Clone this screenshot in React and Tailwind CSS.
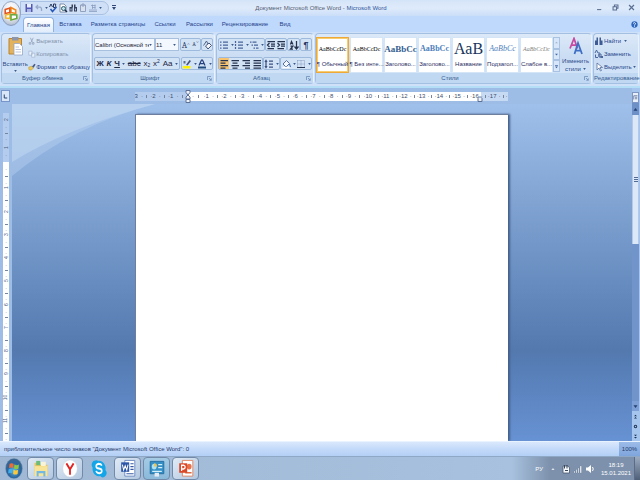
import clsx from 'clsx';

// Small caret used by every drop-down
const Caret = ({ className = '' }) => (
    <svg viewBox="0 0 4 3" className={clsx('w-[3px] h-[2px] shrink-0', className)}>
        <path d="M0 0h4L2 3z" fill="#3b5a8c" />
    </svg>
);

const Icon = ({ size = 'size-[10px]', box = '0 0 20 20', children }) => (
    <svg viewBox={box} className={clsx('shrink-0', size)} fill="none">
        {children}
    </svg>
);

const tabs = ['Вставка', 'Разметка страницы', 'Ссылки', 'Рассылки', 'Рецензирование', 'Вид'];
const tabWidths = ['w-[33px]', 'w-[62px]', 'w-[32px]', 'w-[37px]', 'w-[54px]', 'w-[26px]'];

const styles = [
    { sample: 'AaBbCcDc', name: '¶ Обычный', look: 'text-[6px] text-black', active: true },
    { sample: 'AaBbCcDc', name: '¶ Без инте...', look: 'text-[6px] text-black' },
    { sample: 'AaBbCc', name: 'Заголово...', look: 'text-[9px] font-serif-like font-bold text-[#365f91]' },
    { sample: 'AaBbCc', name: 'Заголово...', look: 'text-[8px] font-bold text-[#4f81bd]' },
    { sample: 'АаВ', name: 'Название', look: 'text-[16px] text-[#17365d]' },
    { sample: 'AaBbCc', name: 'Подзагол...', look: 'text-[8px] italic text-[#4f81bd]' },
    { sample: 'AaBbCcDc', name: 'Слабое в...', look: 'text-[6px] italic text-[#808080]' },
];

const OfficeButton = () => (
    <button aria-label="Office" className="absolute left-[1px] top-[1px] z-10 w-[20px] h-[25px]">
        <svg viewBox="0 0 38 50" preserveAspectRatio="none" className="size-full">
            <defs>
                <radialGradient id="orb" cx="50%" cy="30%" r="75%">
                    <stop offset="0" stopColor="#ffffff" />
                    <stop offset="0.6" stopColor="#e2e6ee" />
                    <stop offset="1" stopColor="#a6b2c8" />
                </radialGradient>
            </defs>
            <ellipse cx="19" cy="25" rx="18" ry="24" fill="url(#orb)" stroke="#7c8fb0" strokeWidth="1.5" />
            <path d="M8 17l9-3v9l-9 2z" fill="#fff" stroke="#e3541c" strokeWidth="3" />
            <path d="M19 13l9 5v7l-9-2z" fill="#fff" stroke="#ef8b1e" strokeWidth="3" />
            <path d="M9 28l8-2v9l-8-1z" fill="#fff" stroke="#f2b62c" strokeWidth="3" />
            <path d="M19 27l11 1v7l-11 3z" fill="#fff" stroke="#69a83b" strokeWidth="3" />
            <path d="M17 13v12" stroke="#e3541c" strokeWidth="2" />
        </svg>
    </button>
);

const QuickAccess = () => (
    <div className="flex items-center h-[14px] ml-[20px] mt-[1px] pl-[3px] pr-[6px] rounded-r-full border border-[#a9c1e4] bg-[#cfdff5]">
        <button aria-label="Сохранить">
            <Icon>
                <path d="M3 2h14v16H3z" fill="#5259b5" />
                <path d="M6 2h8v7H6z" fill="#e8efff" />
                <path d="M6 12h8v6H6z" fill="#aab6e2" />
            </Icon>
        </button>
        <button aria-label="Отменить" className="flex items-center gap-[1px]">
            <Icon><path d="M5 8h7q4 1 3 8M8 4L4 8l4 4" stroke="#97a9ca" strokeWidth="2.5" /></Icon>
            <Caret />
        </button>
        <button aria-label="Правописание">
            <Icon>
                <path d="M3 8l3-6 3 6M11 2h4q2 3-1 3 3 1 1 4h-4z" stroke="#26375f" strokeWidth="2" />
                <path d="M5 12l4 5 8-9" stroke="#2557b8" strokeWidth="3" />
            </Icon>
        </button>
        <button aria-label="Просмотр">
            <Icon>
                <path d="M4 2h8l4 4v12H4z" fill="#fff" stroke="#5c6f93" strokeWidth="1.5" />
                <circle cx="11" cy="11" r="4" fill="#bfe0ee" stroke="#2d5c69" strokeWidth="2" />
                <path d="M14 14l4 4" stroke="#1d2840" strokeWidth="3" />
            </Icon>
        </button>
        <button aria-label="Найти">
            <Icon>
                <path d="M3 8h6v9H3zM12 8h6v9h-6zM7 3h3v6H7zM12 3h3v6h-3z" fill="#36415b" />
                <path d="M5 11h2v4H5zM14 11h2v4h-2z" fill="#bac9e5" />
            </Icon>
        </button>
        <button aria-label="Вставить">
            <Icon><path d="M5 4h10v13H5zM8 2h4v4H8z" fill="#d9e1ef" stroke="#91a2c1" strokeWidth="2" /></Icon>
        </button>
        <button aria-label="Таблица" className="flex items-center gap-[1px]">
            <Icon><path d="M2 14h16M2 17h16M6 5h9M8 9h7M9 3v9M14 3v9" stroke="#8599bd" strokeWidth="1.5" /></Icon>
            <Caret />
        </button>
    </div>
);

const TitleBar = () => (
    <div className="flex h-4 bg-gradient-to-b from-[#d4e4f8] via-[#dfebfb] to-[#cadef8]">
        <div className="w-[116px] shrink-0 flex items-start">
            <QuickAccess />
            <button aria-label="Настройка панели" className="ml-[3px] mt-[5px]">
                <svg viewBox="0 0 4 5" className="w-1 h-[5px]"><path d="M0 0h4v1H0zM0 2h4L2 5z" fill="#304978" /></svg>
            </button>
        </div>
        <h1 className="flex-1 pt-1 text-center whitespace-nowrap text-[#566073]">
            Документ Microsoft Office Word - <span className="text-[#2f559c]">Microsoft Word</span>
        </h1>
        <div className="w-[114px] shrink-0 flex justify-end items-center gap-[9px] pr-[5px] pb-[2px]">
            <button aria-label="Свернуть"><Icon size="size-[7px]"><path d="M3 16h12" stroke="#5b6f92" strokeWidth="3" /></Icon></button>
            <button aria-label="Развернуть"><Icon size="size-[7px]"><path d="M7 7V3h10v9h-4M3 8h10v9H3z" stroke="#5b6f92" strokeWidth="3" /></Icon></button>
            <button aria-label="Закрыть"><Icon size="size-[7px]"><path d="M3 3l14 14M17 3L3 17" stroke="#5b6f92" strokeWidth="3.5" /></Icon></button>
        </div>
    </div>
);

const TabBar = () => (
    <nav className="flex h-4 pl-[23px] bg-[#bfd9fc] text-[#1f3f8a]">
        <button className="w-[31px] mt-[1px] rounded-t-sm border border-b-0 border-[#92b2de] bg-gradient-to-b from-white to-[#e1edfb] text-center">
            Главная
        </button>
        {tabs.map((tab, i) => (
            <button key={tab} className={clsx('text-center whitespace-nowrap', tabWidths[i])}>{tab}</button>
        ))}
        <button aria-label="Справка" className="ml-auto mr-[2px]">
            <Icon size="size-[7px]">
                <circle cx="10" cy="10" r="9" fill="#2c66bd" />
                <path d="M6 7q4-5 7 0 0 3-3 4v2M10 15v2" stroke="#fff" strokeWidth="2.5" />
            </Icon>
        </button>
    </nav>
);

const Group = ({ title, launcher = true, className, children }) => (
    <section className={clsx('flex flex-col rounded-sm border border-[#a3c0e3] border-r-[#e9f3ff] bg-gradient-to-b from-[#dce9f8] via-[#c9dcf3] to-[#d6e7fa]', className)}>
        <div className="flex-1 min-h-0">{children}</div>
        <div className="flex items-center h-[10px] bg-[#c0d8f1] text-[#34598f]">
            <h2 className="flex-1 text-center whitespace-nowrap">{title}</h2>
            {launcher && (
                <button aria-label={title} className="mr-[2px]">
                    <Icon size="size-[5px]"><path d="M2 16V2h14M8 8l9 9M17 9v8H9" stroke="#5878aa" strokeWidth="2.5" /></Icon>
                </button>
            )}
        </div>
    </section>
);

// Framed strip of tool buttons
const Strip = ({ className, children }) => (
    <div className={clsx('flex items-center justify-around h-[13px] rounded-[2px] border border-[#9db9dc] bg-[#d3e3f6]', className)}>
        {children}
    </div>
);

const Tool = ({ label, className, children }) => (
    <button aria-label={label} className={clsx('flex items-center justify-center gap-[2px] h-full', className)}>{children}</button>
);

const Lines = ({ d, color = '#26334f' }) => (
    <Icon><path d={d} stroke={color} strokeWidth="2.5" /></Icon>
);

const Clipboard = () => (
    <Group title="Буфер обмена" className="w-[90px]">
        <div className="flex h-full">
            <button className="w-[27px] flex flex-col items-center pt-[2px] text-[#2b4a8a]">
                <svg viewBox="0 0 30 40" preserveAspectRatio="none" className="w-[15px] h-[20px]">
                    <path d="M2 5h25v31H2z" fill="#e4b25a" stroke="#bb8431" strokeWidth="2" />
                    <path d="M8 2h13v7H8z" fill="#8d96a8" />
                    <path d="M12 15h11l6 6v17H12z" fill="#fff" stroke="#93a3c0" strokeWidth="1.5" />
                    <path d="M15 22h7M15 27h11M15 32h11" stroke="#a5b4cf" strokeWidth="1.5" />
                </svg>
                <span className="mt-1">Вставить</span>
                <Caret className="mt-[2px]" />
            </button>
            <div className="flex flex-col gap-[5px] pt-[3px] whitespace-nowrap">
                <button className="flex items-center text-[#8291ab]">
                    <Icon size="size-[8px]"><path d="M6 2l5 11M13 2L8 13" stroke="#94a3be" strokeWidth="2" /><path d="M3 14h4v4H3zM11 14h4v4h-4z" stroke="#94a3be" strokeWidth="2" /></Icon>
                    Вырезать
                </button>
                <button className="flex items-center text-[#8291ab]">
                    <Icon size="size-[8px]"><path d="M2 3h8v10H2zM9 8h8v10H9z" fill="#e8f0fb" stroke="#9baccb" strokeWidth="1.5" /></Icon>
                    Копировать
                </button>
                <button className="flex items-center text-[#27458a]">
                    <Icon size="size-[8px]"><path d="M2 10l8-2 3 5-5 5-6-2z" fill="#edc95a" stroke="#a8842b" /><path d="M10 9l6-7 3 2-5 8z" fill="#4a5c86" /></Icon>
                    Формат по образцу
                </button>
            </div>
        </div>
    </Group>
);

const Picker = ({ label, value, className }) => (
    <div className={clsx('flex items-center h-[13px] pr-[2px] border border-[#a8c0de] bg-[#f3f8ff]', className)}>
        <select aria-label={label} className="flex-1 min-w-0 h-full appearance-none bg-transparent text-[#1c2538]">
            <option>{value}</option>
        </select>
        <Caret />
    </div>
);

const FontGroup = () => (
    <Group title="Шрифт" className="w-[123px]">
        <div className="flex flex-col gap-[6px] pt-1 px-[1px]">
            <div className="flex">
                <Picker label="Шрифт" value="Calibri (Основной те" className="w-[61px]" />
                <Picker label="Размер" value="11" className="w-[24px]" />
                <Strip className="ml-[1px] w-[22px] text-[#26375f] font-serif">
                    <Tool label="Увеличить размер"><span className="text-[9px]">A<sup className="text-[5px]">˄</sup></span></Tool>
                    <Tool label="Уменьшить размер"><span>A<sup className="text-[5px]">˅</sup></span></Tool>
                </Strip>
                <Strip className="w-[12px]">
                    <Tool label="Очистить формат">
                        <Icon><path d="M3 11L9 2l4 8" stroke="#54658a" strokeWidth="2" /><path d="M7 12l7-6 5 5-7 7z" fill="#f4f6fb" stroke="#445577" strokeWidth="2" /></Icon>
                    </Tool>
                </Strip>
            </div>
            <div className="flex text-[#1d2844]">
                <Strip className="w-[86px] text-[8px]">
                    <Tool label="Полужирный" className="font-bold">Ж</Tool>
                    <Tool label="Курсив" className="font-bold italic">К</Tool>
                    <Tool label="Подчеркнутый"><span className="font-bold underline">Ч</span><Caret /></Tool>
                    <Tool label="Зачеркнутый" className="line-through">abc</Tool>
                    <Tool label="Подстрочный"><span>x<sub className="text-[5px]">2</sub></span></Tool>
                    <Tool label="Надстрочный"><span>x<sup className="text-[5px]">2</sup></span></Tool>
                    <Tool label="Регистр">Aa<Caret /></Tool>
                </Strip>
                <Strip className="ml-[1px] w-[32px]">
                    <Tool label="Цвет выделения">
                        <Icon><path d="M2 14h15v5H2z" fill="#fff200" /><path d="M8 12l7-10 3 2-7 9z" fill="#46557a" /><path d="M3 4h4v5H3z" fill="#5b6c90" /></Icon>
                        <Caret />
                    </Tool>
                    <Tool label="Цвет текста">
                        <Icon><path d="M4 13L9 2h2l5 11M6 9h8" stroke="#25407c" strokeWidth="2.5" /><path d="M2 15h16v4H2z" fill="#1f497d" /></Icon>
                        <Caret />
                    </Tool>
                </Strip>
            </div>
        </div>
    </Group>
);

const ParagraphGroup = () => (
    <Group title="Абзац" className="w-[98px]">
        <div className="flex flex-col gap-[6px] pt-1 px-[1px]">
            <div className="flex">
                <Strip className="w-[48px]">
                    <Tool label="Маркеры"><Lines d="M2 4h3M8 4h10M2 10h3M8 10h10M2 16h3M8 16h10" color="#4a649a" /><Caret /></Tool>
                    <Tool label="Нумерация"><Lines d="M3 2v4M8 4h10M3 8v4M8 10h10M3 14v4M8 16h10" color="#4a649a" /><Caret /></Tool>
                    <Tool label="Многоуровневый список"><Lines d="M2 4h3M7 4h8M5 10h3M10 10h8M9 16h3M14 16h5" color="#4a649a" /><Caret /></Tool>
                </Strip>
                <Strip className="w-[22px]">
                    <Tool label="Уменьшить отступ"><Lines d="M3 3h15M10 8h8M10 12h8M3 17h13M7 6l-4 4 4 4" /></Tool>
                    <Tool label="Увеличить отступ"><Lines d="M3 3h15M10 8h8M10 12h8M3 17h13M3 6l4 4-4 4" /></Tool>
                </Strip>
                <Strip className="w-[13px]">
                    <Tool label="Сортировка"><Lines d="M3 9l2-6 3 6M3 12h5l-5 6h5M15 2v15M11 13l4 5 4-5" /></Tool>
                </Strip>
                <Strip className="w-[12px]">
                    <Tool label="Знаки" className="text-[9px] font-bold text-[#26375f]">¶</Tool>
                </Strip>
            </div>
            <div className="flex">
                <Strip className="w-[46px]">
                    <Tool label="По левому краю" className="bg-[#f8c36c]"><Lines d="M3 3h15M3 8h10M3 13h15M3 18h10" /></Tool>
                    <Tool label="По центру"><Lines d="M3 3h15M5 8h10M3 13h15M5 18h10" /></Tool>
                    <Tool label="По правому краю"><Lines d="M3 3h15M8 8h10M3 13h15M8 18h10" /></Tool>
                    <Tool label="По ширине"><Lines d="M3 3h15M3 8h15M3 13h15M3 18h15" /></Tool>
                </Strip>
                <Strip className="w-[17px]">
                    <Tool label="Интервал"><Lines d="M4 3v14M2 6l2-3 2 3M2 14l2 3 2-3M10 4h8M10 10h8M10 16h8" color="#3c5182" /><Caret /></Tool>
                </Strip>
                <Strip className="w-[32px]">
                    <Tool label="Заливка">
                        <Icon><path d="M4 10l7-7 6 6-7 7z" fill="#f3f7ff" stroke="#5a6f9b" strokeWidth="2" /><path d="M3 17h14" stroke="#fff" strokeWidth="3" /><path d="M17 10l2 6" stroke="#3566b8" strokeWidth="2" /></Icon>
                        <Caret />
                    </Tool>
                    <Tool label="Границы">
                        <Icon><path d="M3 3h14v14M3 3v14M10 3v14M3 10h14" stroke="#7288b0" strokeWidth="1.5" strokeDasharray="2 2" /><path d="M2 17h16" stroke="#26334f" strokeWidth="2" /></Icon>
                        <Caret />
                    </Tool>
                </Strip>
            </div>
        </div>
    </Group>
);

const StylesGroup = () => (
    <Group title="Стили" className="flex-1">
        <div className="flex h-full pt-[3px]">
            <div className="flex gap-[1px] h-[36px]">
                {styles.map((s, i) => (
                    <button
                        key={i}
                        className={clsx(
                            'flex flex-col items-center w-[33px] border bg-white whitespace-nowrap',
                            s.active ? 'border-[#eda837] ring-1 ring-inset ring-[#f6cd70]' : 'border-[#d5e5f8]'
                        )}
                    >
                        <span className={clsx("flex items-center h-[22px] font-['Liberation_Serif',serif]", s.look)}>{s.sample}</span>
                        <span className="text-[#2b2e63]">{s.name}</span>
                    </button>
                ))}
            </div>
            <div className="flex flex-col w-[7px] h-[35px]">
                {['M3 9l4-4 4 4z', 'M3 5l4 5 4-5z', 'M3 3h8v2H3zM3 7l4 5 4-5z'].map((d, i) => (
                    <button key={d} aria-label="Прокрутка" className="flex-1 flex items-center justify-center border border-[#a9c2e2] bg-[#d7e6f8]">
                        <Icon box="0 0 14 14" size="size-[5px]"><path d={d} fill={i ? '#4467a4' : '#a6b5cf'} /></Icon>
                    </button>
                ))}
            </div>
            <button className="flex-1 flex flex-col items-center text-[#2b4a8a]">
                <svg viewBox="0 0 28 36" className="w-[16px] h-[19px]" fill="none">
                    <path d="M2 23L10 3l7 20M5 16h9" stroke="#c64a9f" strokeWidth="3.5" />
                    <path d="M11 34l7-22 8 22M14 27h9" stroke="#3e6fc4" strokeWidth="3.5" />
                </svg>
                <span className="mt-[2px]">Изменить</span>
                <span className="flex items-center gap-[2px]">стили<Caret /></span>
            </button>
        </div>
    </Group>
);

const EditingGroup = () => (
    <Group title="Редактирование" launcher={false} className="w-[46px]">
        <div className="flex flex-col gap-[3px] pt-[2px] whitespace-nowrap text-[#27458a]">
            <button className="flex items-center">
                <Icon><path d="M2 9h6v9H2zM11 9h6v9h-6zM5 3h3v7H5zM11 3h3v7h-3z" fill="#3f5b93" /></Icon>
                Найти <Caret className="ml-[3px]" />
            </button>
            <button className="flex items-center">
                <Icon><path d="M2 8l3-6 3 6M3 11v6h5M10 10h4v6h-4zM10 6v9" stroke="#4b679c" strokeWidth="2" /><path d="M13 14h5v4h-5z" fill="#4b679c" /></Icon>
                Заменить
            </button>
            <button className="flex items-center">
                <Icon><path d="M6 2v14l4-4 3 6 2-1-3-6h5z" fill="#fff" stroke="#506a9a" strokeWidth="1.5" /></Icon>
                Выделить <Caret className="ml-[1px]" />
            </button>
        </div>
    </Group>
);

const Ribbon = () => (
    <div className="flex gap-[1px] h-14 px-[1px] pt-[1px] pb-[2px] bg-[#cfe1f8] border-b-2 border-[#b4def5]">
        <Clipboard />
        <FontGroup />
        <ParagraphGroup />
        <StylesGroup />
        <EditingGroup />
    </div>
);

// 21 centimetre cells: 3 in the left margin, the rest counted from zero
const HorizontalRuler = () => (
    <div className="relative flex w-[373px] h-[9px] text-[6px] leading-[9px] text-[#3f4f6e]">
        {Array.from({ length: 21 }, (_, i) => (
            <div
                key={i}
                className={clsx(
                    'flex flex-1 min-w-0 justify-between items-center overflow-hidden',
                    i < 3 && 'bg-[#b4cdee]',
                    i >= 3 && i < 19 && 'bg-white',
                    i === 19 && 'bg-linear-to-r from-white from-50% to-[#c6daf4] to-50%',
                    i === 20 && 'bg-[#c6daf4]'
                )}
            >
                <span>{i === 3 ? '' : Math.abs(i - 3)}</span>
                <span>·</span>
                <i className="w-px h-[3px] bg-[#76849c]" />
                <span>·</span>
            </div>
        ))}
        <svg viewBox="0 0 6 13" className="absolute left-[50px] top-[-2px] w-[6px] h-[13px]">
            <path d="M1 .5h4v2L3 5 1 2.5zM3 5l2 2v2H1V7zM1 9.500h4v3H1z" fill="#eef3fb" stroke="#5d7196" />
        </svg>
        <svg viewBox="0 0 6 6" className="absolute left-[342px] top-[4px] size-[6px]">
            <path d="M3 .5l2 2v3H1v-3z" fill="#eef3fb" stroke="#5d7196" />
        </svg>
    </div>
);

const VerticalRuler = () => (
    <div className="flex flex-col w-[9px] shrink-0 mr-[3px] pt-[9px] pl-[3px] text-[5px] leading-[5px] text-[#4b5c7c]">
        <div className="flex flex-col items-center justify-between h-[49px] py-1 bg-[#b4cdee]">
            <span className="-rotate-90">2</span><span>·</span><i className="w-[3px] h-px bg-[#76849c]" /><span>·</span><span className="-rotate-90">1</span><span>·</span>
        </div>
        <div className="flex flex-col flex-1 bg-white">
            {Array.from({ length: 12 }, (_, i) => (
                <div key={i} className="flex flex-1 min-h-0 flex-col items-center justify-between">
                    <span className="-rotate-90">{i || ''}</span>
                    <span className="h-1">·</span>
                    <i className="w-[3px] h-px bg-[#76849c]" />
                    <span className="h-1">·</span>
                </div>
            ))}
        </div>
    </div>
);

const ScrollBar = () => (
    <div className="flex flex-col w-2 shrink-0 pt-1 pr-[1px] bg-[#a6c5ee]">
        <button aria-label="Линейка" className="h-[11px] border border-[#7d97c2] bg-[#e9f0fb] flex items-center justify-center">
            <Icon size="size-[5px]"><path d="M3 18V3h15M8 9h9M8 15h9" stroke="#54688f" strokeWidth="3" /></Icon>
        </button>
        <button aria-label="Вверх" className="h-[12px] bg-[#6d90c6] flex items-center justify-center">
            <Icon size="size-[5px]"><path d="M2 15h16L10 4z" fill="#243f70" /></Icon>
        </button>
        <div className="flex flex-col flex-1 bg-[#7195cb]">
            <div className="flex items-center justify-center h-[45%] border-x border-[#b2c9e9] bg-[#dce8f8]">
                <svg viewBox="0 0 4 5" className="w-1 h-[5px]"><path d="M0 0h4v1H0zM0 2h4v1H0zM0 4h4v1H0z" fill="#536a93" /></svg>
            </div>
        </div>
        <button aria-label="Вниз" className="h-[10px] bg-[#7ca0d5] flex items-center justify-center">
            <Icon size="size-[5px]"><path d="M2 5h16l-8 11z" fill="#243f70" /></Icon>
        </button>
        {['M4 9l6-6 6 6zM4 18l6-6 6 6z', 'M10 3a7 7 0 100 14 7 7 0 000-14zm0 4a3 3 0 110 6 3 3 0 010-6z', 'M4 3l6 6 6-6zM4 12l6 6 6-6z'].map((d) => (
            <button key={d} aria-label="Переход" className="h-[10px] flex items-center justify-center">
                <Icon size="size-[5px]"><path d={d} fill="#1f3355" /></Icon>
            </button>
        ))}
    </div>
);

const Workspace = () => (
    <main className="flex flex-1 min-h-0 bg-[#9dbde6]">
        <div className="flex flex-col flex-1 min-w-0">
            <div className="flex items-center h-4">
                <button aria-label="Табуляция" className="w-[9px] h-[12px] ml-[1px] mr-[2px] border border-[#7795c8] bg-[#d9e6f8] flex items-center justify-center">
                    <Icon size="size-[5px]"><path d="M5 2v14h12" stroke="#27406f" strokeWidth="4" /></Icon>
                </button>
                <div className="flex-1 flex justify-center pr-[2px]">
                    <HorizontalRuler />
                </div>
            </div>
            <div className="flex flex-1 min-h-0">
                <VerticalRuler />
                <div className="relative flex-1 flex justify-center pt-[10px] pr-[2px] overflow-hidden bg-linear-to-b from-[#9fc0ea] via-[#5379af] via-[73%] to-[#6792d3]">
                    <svg viewBox="0 0 150 74" className="absolute left-0 top-0 w-[150px] h-[74px]">
                        <path d="M0 0h143Q60 22 0 72z" fill="#b9d1ef" opacity="0.45" />
                        <path d="M0 0h143Q55 24 0 58z" fill="#c4d9f3" opacity="0.5" />
                    </svg>
                    <article className="relative w-[373px] bg-white border-t border-l border-[#6d7f9c] shadow-[2px_0_2px_#44608c]" />
                </div>
            </div>
        </div>
        <ScrollBar />
    </main>
);

const StatusBar = () => (
    <div className="flex items-center h-[15px] border-t border-[#e9f3ff] bg-gradient-to-b from-[#d9e8fc] via-[#c4dafa] to-[#b3cff5] text-[#263c6b]">
        <p className="flex-1 pl-1">приблизительное число знаков "Документ Microsoft Office Word": 0</p>
        <button className="h-full w-[21px] bg-gradient-to-b from-[#9cbbe8] to-[#7ea5dc] text-center">100%</button>
    </div>
);

const apps = [
    {
        name: 'Проводник',
        art: (
            <>
                <path d="M4 8h10l3 4h19v24H4z" fill="#ecc65b" />
                <path d="M8 4h10v9H8z" fill="#6cbb79" /><path d="M20 6h12v9H20z" fill="#f9f4d7" />
                <path d="M4 15h32v21H4z" fill="#f8e496" />
                <path d="M9 37V25h22v12h-5v-7H14v7z" fill="#71b8e4" />
            </>
        ),
    },
    {
        name: 'Яндекс',
        art: (
            <>
                <circle cx="20" cy="20" r="18" fill="#fff" stroke="#d5d9df" />
                <path d="M11 9l9 13v11M29 9l-9 13" stroke="#e02424" strokeWidth="4.500" />
            </>
        ),
    },
    {
        name: 'Skype',
        flat: true,
        art: (
            <>
                <path d="M11 3a9 9 0 017 1 16 16 0 0118 19 9 9 0 01-13 13A16 16 0 014 18 9 9 0 0111 3z" fill="#12a5e8" />
                <path d="M27 14q-2-4-8-4-6 1-6 5t7 5 7 5-6 5q-7 0-8-5" stroke="#fff" strokeWidth="4" />
            </>
        ),
    },
    {
        name: 'Word',
        art: (
            <>
                <path d="M12 3h25v33H12z" fill="#fff" stroke="#6382bd" strokeWidth="2" />
                <path d="M26 10h8M26 16h8M26 22h8M16 31h18" stroke="#375ba6" strokeWidth="2.5" />
                <path d="M3 7h20v20H3z" fill="#2c56a7" />
                <path d="M6 12l3 11 4-9 4 9 3-11" stroke="#fff" strokeWidth="2.500" />
            </>
        ),
    },
    {
        name: 'Панель управления',
        hot: true,
        art: (
            <>
                <path d="M3 5h34v26H3z" fill="#338fc6" stroke="#246b9e" strokeWidth="2" />
                <circle cx="13" cy="16" r="6" fill="#aee0ef" /><path d="M13 16V9a7 7 0 017 7z" fill="#f2c24b" />
                <path d="M23 12h10M23 18h10M8 26h24" stroke="#d4f0fa" strokeWidth="2.5" />
                <path d="M14 29h11v8H14z" fill="#e5ebf3" />
            </>
        ),
    },
    {
        name: 'PowerPoint',
        art: (
            <>
                <path d="M11 3h26v33H11z" fill="#fff" stroke="#df805c" strokeWidth="2" />
                <circle cx="28" cy="16" r="6" fill="#e8714a" /><path d="M18 29h16" stroke="#de6237" strokeWidth="3" />
                <path d="M3 9h20v20H3z" fill="#d8492a" />
                <path d="M9 25V13h5q4 1 4 4t-4 4H9" stroke="#fff" strokeWidth="3" />
            </>
        ),
    },
];

const Taskbar = () => (
    <footer className="flex items-center h-6 border-t border-[#8fa8c6] bg-linear-to-r from-[#a0b8d4] via-[#a7c1de] via-[80%] to-[#7d91ac] to-[86%]">
        <button aria-label="Пуск" className="w-[27px] flex justify-center">
            <svg viewBox="0 0 40 50" className="w-[18px] h-[23px]">
                <defs>
                    <radialGradient id="start" cx="50%" cy="60%" r="60%">
                        <stop offset="0" stopColor="#5db8e2" />
                        <stop offset="0.6" stopColor="#2b659f" />
                        <stop offset="1" stopColor="#41658c" />
                    </radialGradient>
                </defs>
                <ellipse cx="20" cy="25" rx="19" ry="23" fill="url(#start)" stroke="#94b2ce" />
                <path d="M10 15q5-3 9 0l-1 9q-5-3-9 0z" fill="#ef6b31" />
                <path d="M21 16q5 3 10 0l-1 9q-5 3-10 0z" fill="#8dc63f" />
                <path d="M8 27q5-3 9 0l-1 9q-4-3-9 0z" fill="#41b0ec" />
                <path d="M19 28q5 3 10 0l-1 9q-5 3-10 0z" fill="#fdc93b" />
            </svg>
        </button>
        <div className="flex h-full gap-[2px]">
            {apps.map((app) => (
                <button
                    key={app.name}
                    aria-label={app.name}
                    className={clsx(
                        'flex items-center justify-center w-[27px] h-full rounded-sm',
                        !app.flat && 'border border-[#728aa9]',
                        !app.flat && (app.hot ? 'bg-gradient-to-b from-[#a5cbe5] to-[#8ab9da]' : 'bg-gradient-to-br from-[#e0eaf5] to-[#b2c7df]')
                    )}
                >
                    <svg viewBox="0 0 40 40" preserveAspectRatio="none" fill="none" className="w-[16px] h-[19px]">{app.art}</svg>
                </button>
            ))}
        </div>
        <div className="ml-auto flex items-center gap-[2px] text-white">
            <button className="mr-[6px]">РУ</button>
            <button aria-label="Скрытые значки" className="mr-1"><Icon size="size-[4px]"><path d="M2 14h16l-8-8z" fill="#fff" /></Icon></button>
            <Icon><path d="M4 4h9l4 3v11H4z" fill="#f7f9fc" stroke="#445369" strokeWidth="1.5" /><path d="M7 2v7M12 2v7M8 13h6" stroke="#39475b" strokeWidth="2" /></Icon>
            <Icon><path d="M2 18v-4h2v4zM6 18v-7h2v7zM10 18V8h2v10zM14 18V4h3v14z" fill="#eef3f8" stroke="#62738a" strokeWidth="0.5" /></Icon>
            <Icon><path d="M2 7h4l6-5v16l-6-5H2z" fill="#fff" /><path d="M15 6q3 4 0 8" stroke="#fff" strokeWidth="2" /></Icon>
            <div className="ml-[3px] w-[32px] flex flex-col text-center">
                <span>18:19</span>
                <span>15.01.2021</span>
            </div>
        </div>
        <button aria-label="Рабочий стол" className="w-[6px] h-full ml-[2px] border-l border-[#5b6d86] bg-gradient-to-b from-[#9cabc0] to-[#4e6078]" />
    </footer>
);

const App = () => (
    <div className="relative flex flex-col h-screen w-full overflow-hidden text-[6px] leading-[8px] font-['Liberation_Sans',Arial,sans-serif]">
        <OfficeButton />
        <TitleBar />
        <TabBar />
        <Ribbon />
        <Workspace />
        <StatusBar />
        <Taskbar />
    </div>
);

export default App;
